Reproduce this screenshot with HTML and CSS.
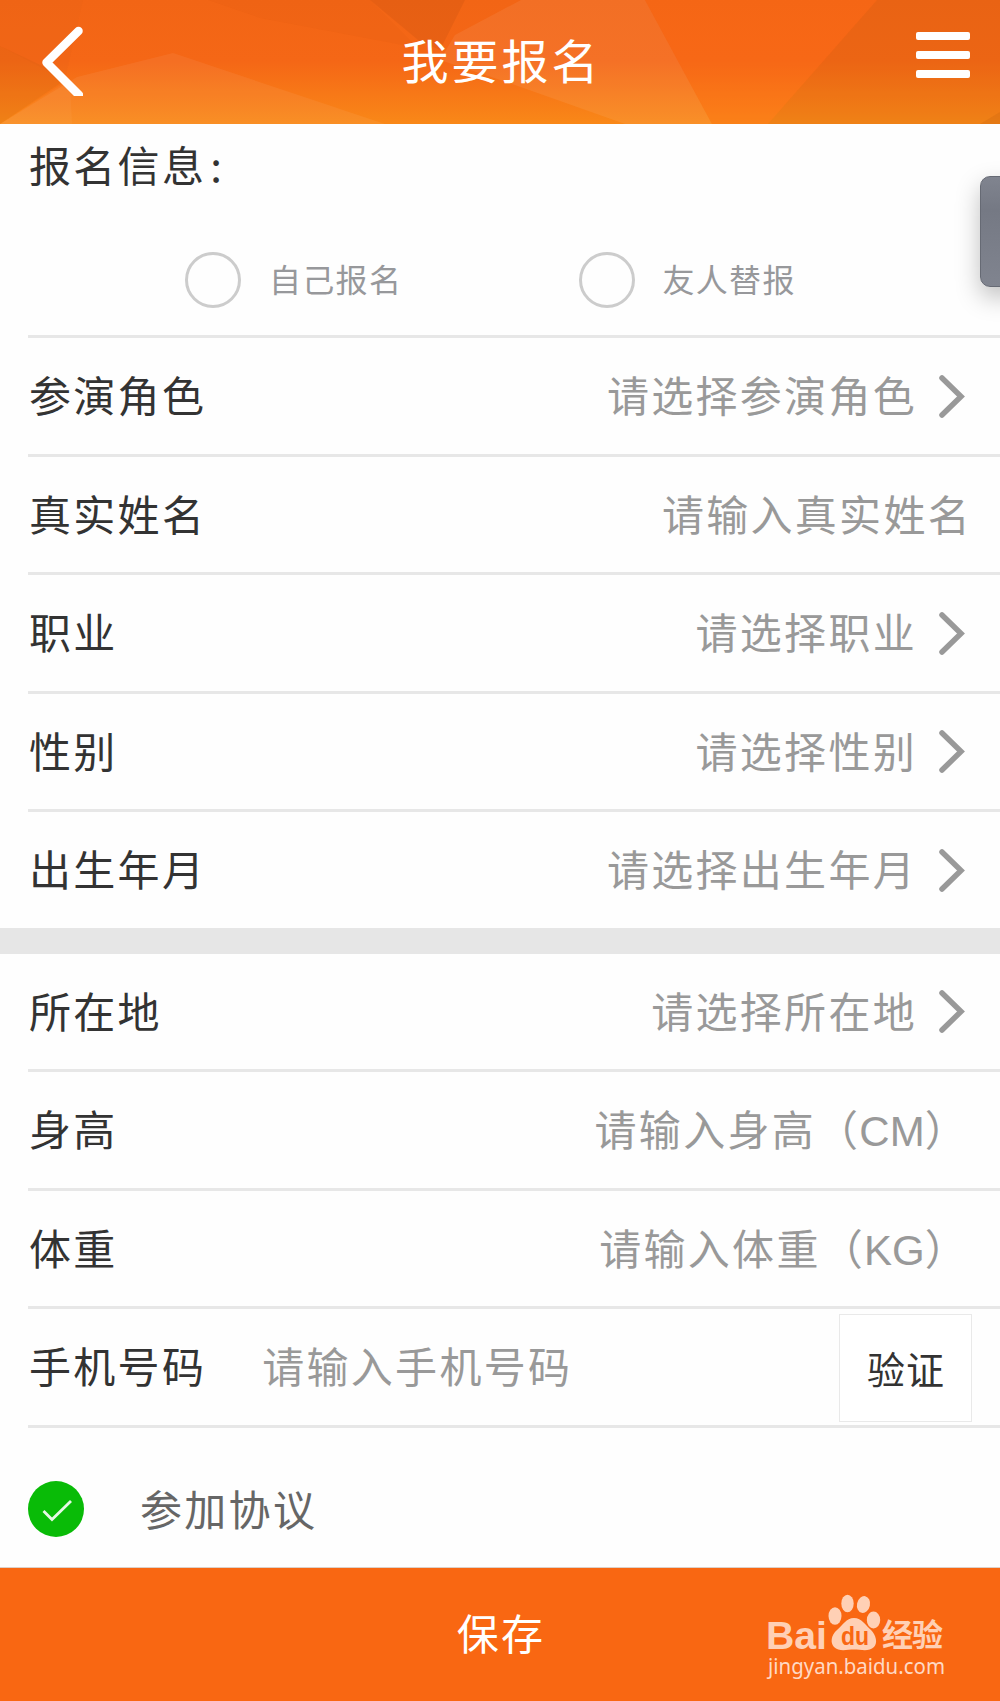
FILE: index.html
```
<!DOCTYPE html>
<html lang="zh-CN">
<head>
    <meta charset="UTF-8">
    <meta name="viewport" content="width=device-width, initial-scale=1.0">
    <title>我要报名</title>
    <link rel="stylesheet" href="styles.css">
</head>
<body>
    <header class="header">
        <svg class="header-bg" viewBox="0 0 1000 124" preserveAspectRatio="none">
            <defs>
                <linearGradient id="bg" x1="0" y1="0" x2="0" y2="1">
                    <stop offset="0" stop-color="#f26515"/>
                    <stop offset="0.5" stop-color="#f56716"/>
                    <stop offset="1" stop-color="#f98818"/>
                </linearGradient>
            </defs>
            <rect width="1000" height="124" fill="url(#bg)"/>
            <polygon points="0,0 83,0 65,80 0,46" fill="#c85a14" opacity="0.08"/>
            <polygon points="0,46 68,78 0,124" fill="#b85a10" opacity="0.14"/>
            <polygon points="0,124 77,77 173,53 385,124" fill="#fff" opacity="0.06"/>
            <polygon points="0,124 62,84 70,80 72,124" fill="#fff" opacity="0.04"/>
            <polygon points="208,0 370,0 418,48 260,18" fill="#c85010" opacity="0.08"/>
            <polygon points="370,0 465,0 440,50 418,40" fill="#b84a10" opacity="0.2"/>
            <polygon points="440,60 455,35 521,0 645,0 712,124 625,124 515,85" fill="#fff" opacity="0.07"/>
            <polygon points="645,0 877,0 768,124 712,124" fill="#ff6a18" opacity="0.25"/>
            <polygon points="877,0 1000,0 1000,124 768,124" fill="#b85a10" opacity="0.14"/>
            <polygon points="980,124 1000,112 1000,124" fill="#b85a10" opacity="0.2"/>
        </svg>
        <svg class="back" viewBox="0 0 42 70">
            <path d="M37.500 5 L5.500 36.500 L38 69" fill="none" stroke="#fff" stroke-width="8.500" stroke-linecap="round" stroke-linejoin="round"/>
        </svg>
        <h1>我要报名</h1>
        <div class="menu">
            <span></span>
            <span></span>
            <span></span>
        </div>
    </header>

    <main>
        <h2>报名信息<span class="colon">:</span></h2>
        <div class="radio-group">
            <label class="radio"><i></i><span>自己报名</span></label>
            <label class="radio"><i></i><span>友人替报</span></label>
        </div>

        <div class="list">
            <div class="row">
                <span class="name">参演角色</span>
                <span class="value">请选择参演角色</span>
                <svg class="arrow" viewBox="0 0 26 44"><path d="M3 4 L22 22.500 L3 41"/></svg>
            </div>
            <div class="row">
                <span class="name">真实姓名</span>
                <span class="value">请输入真实姓名</span>
            </div>
            <div class="row">
                <span class="name">职业</span>
                <span class="value">请选择职业</span>
                <svg class="arrow" viewBox="0 0 26 44"><path d="M3 4 L22 22.500 L3 41"/></svg>
            </div>
            <div class="row">
                <span class="name">性别</span>
                <span class="value">请选择性别</span>
                <svg class="arrow" viewBox="0 0 26 44"><path d="M3 4 L22 22.500 L3 41"/></svg>
            </div>
            <div class="row">
                <span class="name">出生年月</span>
                <span class="value">请选择出生年月</span>
                <svg class="arrow" viewBox="0 0 26 44"><path d="M3 4 L22 22.500 L3 41"/></svg>
            </div>
        </div>

        <div class="gap"></div>

        <div class="list second">
            <div class="row">
                <span class="name">所在地</span>
                <span class="value">请选择所在地</span>
                <svg class="arrow" viewBox="0 0 26 44"><path d="M3 4 L22 22.500 L3 41"/></svg>
            </div>
            <div class="row">
                <span class="name">身高</span>
                <span class="value with-unit">请输入身高（<span class="unit">CM</span>）</span>
            </div>
            <div class="row">
                <span class="name">体重</span>
                <span class="value with-unit">请输入体重（<span class="unit">KG</span>）</span>
            </div>
            <div class="row">
                <span class="name">手机号码</span>
                <span class="value phone">请输入手机号码</span>
                <button class="verify">验证</button>
            </div>
        </div>

        <div class="agree">
            <svg class="check" viewBox="0 0 56 56">
                <circle cx="28" cy="28" r="28" fill="#09bb07"/>
                <path d="M15.500 30 L24 38.500 L43 20" fill="none" stroke="#e6f8e6" stroke-width="2.800"/>
            </svg>
            <span>参加协议</span>
        </div>
    </main>

    <footer class="footer">
        <button class="save">保存</button>
        <div class="watermark">
            <svg width="200" height="100" viewBox="0 0 200 100">
                <g fill="#ffd0b5">
                    <text class="wm-latin" x="6" y="58" textLength="61" lengthAdjust="spacingAndGlyphs">Bai</text>
                    <ellipse cx="75" cy="25" rx="6.500" ry="8.700"/>
                    <ellipse cx="87.500" cy="12.500" rx="6.200" ry="8.700"/>
                    <ellipse cx="103.500" cy="13.500" rx="6.500" ry="8.500" transform="rotate(12 103.500 13.500)"/>
                    <ellipse cx="113.500" cy="29" rx="6.700" ry="8.500"/>
                    <path d="M94 27 C86 27 83 34 77 39 C71 44 70 52 74 56 C79 61 87 58.500 94 58.500 C101 58.500 109 61 114 56 C118 52 116 44 111 39 C105 34 102 27 94 27 Z"/>
                    <text class="wm-cn" x="122" y="55">经验</text>
                </g>
                <text class="wm-du" x="81" y="54" textLength="28" lengthAdjust="spacingAndGlyphs" fill="#f96712">du</text>
                <text class="wm-url" x="8" y="83" textLength="177" lengthAdjust="spacingAndGlyphs" fill="#ffd9c4">jingyan.baidu.com</text>
            </svg>
        </div>
    </footer>

    <div class="side-tab"></div>
</body>
</html>
```
FILE: styles.css
```
* {
    box-sizing: border-box;
}
body {
    position: relative;
    margin: 0;
    width: 1000px;
    height: 1701px;
    overflow: hidden;
    display: flex;
    flex-direction: column;
    background-color: #fefefe;
    color: #333;
    font-family: "Noto Sans CJK SC", sans-serif;
    font-size: 42px;
    letter-spacing: 2.3px;
}
h1, h2 {
    margin: 0;
    font-weight: normal;
}
.header {
    position: relative;
    height: 124px;
    display: flex;
    justify-content: space-between;
    align-items: flex-start;
    padding: 26px 30px 0 41px;
    color: #fff;
}
.header-bg {
    position: absolute;
    left: 0;
    top: 0;
    width: 100%;
    height: 100%;
    z-index: -1;
}
.back {
    width: 42px;
    height: 70px;
}
.header h1 {
    font-size: 47px;
    line-height: 65px;
    letter-spacing: 3px;
    margin-left: 4px;
}
.menu {
    width: 54px;
    display: flex;
    flex-direction: column;
    gap: 11px;
    padding-top: 6px;
}
.menu span {
    height: 8px;
    border-radius: 2px;
    background-color: #fff;
}
h2 {
    font-size: 42px;
    line-height: 60px;
    padding: 10px 0 0 29px;
}
.colon {
    margin-left: 4px;
}
.radio-group {
    height: 144px;
    margin-left: 28px;
    padding: 58px 0 0 157px;
    display: flex;
    align-items: flex-start;
    border-bottom: 3px solid #e7e7e7;
}
.radio {
    width: 393.5px;
    display: flex;
    align-items: center;
    gap: 28px;
    height: 56px;
    font-size: 32px;
    letter-spacing: 1.3px;
    color: #97989b;
}
.radio span {
    padding-bottom: 4px;
}
.radio i {
    width: 56px;
    height: 56px;
    border: 3px solid #ccc;
    border-radius: 50%;
}
.list {
    padding-left: 28px;
}
.row {
    height: 118.5px;
    display: flex;
    align-items: center;
    padding-right: 28px;
    border-bottom: 3px solid #e7e7e7;
}
.list:not(.second) .row:last-child {
    border-bottom: none;
    height: 115.5px;
}
.name {
    padding: 0 0 4px 1px;
}
.value {
    margin-left: auto;
    padding-bottom: 4px;
    color: #999;
}
.value.with-unit {
    padding-right: 3px;
}
.unit {
    font-family: "Liberation Sans", Arial, sans-serif;
    letter-spacing: 0;
    margin-left: -1px;
}
.value.phone {
    margin-left: 56px;
    margin-right: auto;
}
.arrow {
    width: 26px;
    height: 44px;
    margin-left: 22px;
    margin-right: 7px;
}
.arrow path {
    fill: none;
    stroke: #999;
    stroke-width: 5.5;
    stroke-linecap: round;
}
.gap {
    height: 26px;
    background-color: #e6e6e6;
}
.verify {
    width: 133px;
    height: 108px;
    margin-top: 3px;
    border: 1px solid #e9e9e9;
    background-color: #fff;
    color: #333;
    font-family: inherit;
    font-size: 38px;
    letter-spacing: 1px;
    padding: 0 0 2px 1px;
}
.agree {
    padding: 52px 0 0 28px;
    display: flex;
    align-items: center;
    gap: 56px;
    line-height: 56px;
    color: #666;
}
.agree span {
    padding-bottom: 3px;
}
.check {
    width: 56px;
    height: 56px;
}
.footer {
    position: relative;
    height: 134px;
    margin-top: auto;
    display: flex;
    background-color: #f96712;
    border-top: 1px solid #ddd0c8;
}
.save {
    flex: 1;
    border: none;
    background: none;
    color: #fff;
    font-family: inherit;
    font-size: 42px;
    letter-spacing: 2.3px;
    padding: 0 0 6px 2px;
}
.watermark {
    position: absolute;
    left: 760px;
    top: 23px;
}
.wm-latin {
    font: bold 39px "Liberation Sans", sans-serif;
    letter-spacing: 0;
}
.wm-du {
    font: bold 25px "Liberation Sans", sans-serif;
    letter-spacing: 0;
}
.wm-cn {
    font: bold 31px "Noto Sans CJK SC", sans-serif;
    letter-spacing: -1px;
}
.wm-url {
    font: 22px "Noto Sans", sans-serif;
    letter-spacing: 0;
}
.side-tab {
    position: absolute;
    left: 980px;
    top: 176px;
    width: 40px;
    height: 111px;
    border: 1px solid #666a74;
    border-radius: 10px;
    background: linear-gradient(#80848f, #757984 30%, #80848f);
    box-shadow: 0 10px 24px rgba(0,0,0,0.25);
}
```
